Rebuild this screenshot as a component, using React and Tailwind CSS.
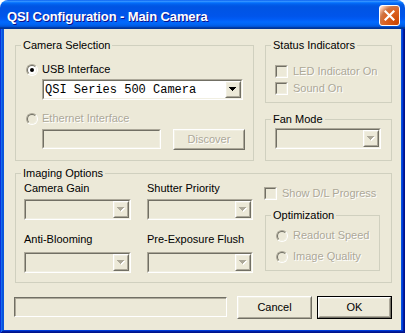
import React from 'react';

const DIS = 'text-[#ACA899] [text-shadow:1px_1px_0_#fff]';

function Sunken({ className = '', inner = '', children }) {
  return (
    <div className={`border border-t-[#ACA899] border-l-[#ACA899] border-r-white border-b-white ${className}`}>
      <div className={`h-full border border-t-[#716F64] border-l-[#716F64] border-r-[#F1EFE2] border-b-[#F1EFE2] ${inner}`}>
        {children}
      </div>
    </div>
  );
}

function Raised({ className = '', inner = '', children }) {
  return (
    <div className={`border border-t-white border-l-white border-r-[#716F64] border-b-[#716F64] ${className}`}>
      <div className={`h-full border border-t-[#F1EFE2] border-l-[#F1EFE2] border-r-[#ACA899] border-b-[#ACA899] ${inner}`}>
        {children}
      </div>
    </div>
  );
}

function Tri({ disabled }) {
  const rows = (fill, dx, dy) =>
    [0, 1, 2, 3].map((i) => (
      <rect key={fill + i} x={i + dx} y={i + dy} width={7 - 2 * i} height={1} fill={fill} />
    ));
  return (
    <svg width="8" height="5" shapeRendering="crispEdges">
      {disabled ? [...rows('#fff', 1, 1), ...rows('#ACA899', 0, 0)] : rows('#000', 0, 0)}
    </svg>
  );
}

function Combo({ className = '', value, disabled }) {
  return (
    <Sunken className={className} inner={`flex items-stretch ${disabled ? 'bg-[#ECE9D8]' : 'bg-white'}`}>
      <div className="flex-1 flex items-center pl-[1px] font-['Liberation_Mono',monospace] text-[12px] leading-[14px] text-black whitespace-nowrap overflow-hidden">
        {value}
      </div>
      <Raised className="w-[16px]" inner="flex items-center justify-center bg-[#ECE9D8]">
        <Tri disabled={disabled} />
      </Raised>
    </Sunken>
  );
}

function Radio({ checked, disabled }) {
  return (
    <div className="w-[12px] h-[12px] shrink-0 rounded-full border border-t-[#ACA899] border-l-[#ACA899] border-r-white border-b-white">
      <div
        className={`w-full h-full rounded-full border border-t-[#716F64] border-l-[#716F64] border-r-[#F1EFE2] border-b-[#F1EFE2] flex items-center justify-center ${
          disabled ? 'bg-[#ECE9D8]' : 'bg-white'
        }`}
      >
        {checked && <div className="w-[4px] h-[4px] rounded-full bg-black" />}
      </div>
    </div>
  );
}

function Check() {
  return <Sunken className="w-[13px] h-[13px] shrink-0" inner="bg-[#ECE9D8]" />;
}

function Row({ children, gap = 'gap-[4px]' }) {
  return <div className={`flex items-center h-[13px] ${gap}`}>{children}</div>;
}

function Group({ title, className = '', children }) {
  return (
    <div className={`relative border border-[#D0D0BF] ${className}`}>
      <span className="absolute -top-[7px] left-[5px] bg-[#ECE9D8] px-[2px] leading-[13px] text-black whitespace-nowrap">
        {title}
      </span>
      {children}
    </div>
  );
}

function Label({ children, disabled }) {
  return <span className={`leading-[13px] whitespace-nowrap ${disabled ? DIS : 'text-black'}`}>{children}</span>;
}

export default function App() {
  return (
    <div className="w-[405px] h-[333px] bg-white font-['Liberation_Sans',Arial,sans-serif] text-[11px] overflow-hidden">
      <div className="w-[405px] h-[333px] flex flex-col rounded-t-[8px] overflow-hidden">
        {/* Title bar */}
        <div className="h-[29px] shrink-0 flex items-start pl-[7px] pr-[5px] bg-[linear-gradient(180deg,#0058EE_0%,#3A93FF_4%,#288EFF_6%,#127DFF_8%,#036FFC_10%,#0262EE_14%,#0057E5_20%,#0054E3_24%,#0055EB_56%,#005BF5_66%,#026AFE_76%,#0062EF_86%,#0052D6_92%,#0040AB_94%,#003092_100%)]">
          <span className="mt-[10px] text-white font-bold text-[13px] leading-[13px] tracking-[-0.1px] [text-shadow:1px_1px_#0F1089] whitespace-nowrap">
            QSI Configuration - Main Camera
          </span>
          <div className="ml-auto mt-[5px] w-[21px] h-[21px] rounded-[3px] border border-white bg-[radial-gradient(circle_at_90%_90%,#CC4600_0%,#DC6527_55%,#CD7546_70%,#FFCCB2_90%,#ffffff_100%)] flex items-center justify-center">
            <svg width="11" height="11" viewBox="0 0 11 11">
              <path d="M1.5 1.5 L9.5 9.5 M9.5 1.5 L1.5 9.5" stroke="#fff" strokeWidth="2.2" strokeLinecap="square" />
            </svg>
          </div>
        </div>

        {/* Frame */}
        <div className="flex-1 flex px-[4px] pb-[3px] bg-[#0855DD] shadow-[inset_1px_0_#0831D9,inset_-1px_-1px_#00138C,inset_2px_0_#166AEE,inset_-2px_-2px_#001EA0,inset_3px_0_#0855DD,inset_-3px_-3px_#003BDA]">
          <div className="flex-1 bg-[#ECE9D8] flex flex-col pt-[16px]">
            {/* Top row */}
            <div className="flex gap-[11px] ml-[11px]">
              <Group title="Camera Selection" className="w-[239px] h-[116px]">
                <div className="flex flex-col pl-[10px] pt-[17px]">
                  <Row>
                    <Radio checked />
                    <Label>USB Interface</Label>
                  </Row>
                  <Combo className="ml-[16px] mt-[3px] w-[201px] h-[21px]" value="QSI Series 500 Camera" />
                  <div className="mt-[12px]">
                    <Row>
                      <Radio disabled />
                      <Label disabled>Ethernet Interface</Label>
                    </Row>
                  </div>
                  <div className="flex items-start ml-[16px] mt-[4px] gap-[12px]">
                    <Sunken className="w-[119px] h-[20px]" inner="bg-[#ECE9D8]" />
                    <Raised className="w-[72px] h-[21px]" inner="flex items-center justify-center bg-[#ECE9D8]">
                      <Label disabled>Discover</Label>
                    </Raised>
                  </div>
                </div>
              </Group>

              <div className="flex flex-col gap-[16px]">
                <Group title="Status Indicators" className="w-[127px] h-[58px]">
                  <div className="flex flex-col gap-[4px] pl-[9px] pt-[19px]">
                    <Row gap="gap-[5px]">
                      <Check />
                      <Label disabled>LED Indicator On</Label>
                    </Row>
                    <Row gap="gap-[5px]">
                      <Check />
                      <Label disabled>Sound On</Label>
                    </Row>
                  </div>
                </Group>
                <Group title="Fan Mode" className="w-[127px] h-[42px]">
                  <div className="pl-[9px] pt-[8px]">
                    <Combo className="w-[106px] h-[21px]" disabled value="" />
                  </div>
                </Group>
              </div>
            </div>

            {/* Imaging options */}
            <Group title="Imaging Options" className="ml-[11px] mt-[12px] w-[377px] h-[110px]">
              <div className="flex pl-[8px]">
                <div className="flex flex-col w-[107px] pt-[8px]">
                  <Label>Camera Gain</Label>
                  <Combo className="mt-[4px] w-[107px] h-[21px]" disabled value="" />
                  <div className="mt-[11px]">
                    <Label>Anti-Blooming</Label>
                  </div>
                  <Combo className="mt-[4px] w-[107px] h-[21px]" disabled value="" />
                </div>
                <div className="flex flex-col w-[106px] ml-[16px] pt-[8px]">
                  <Label>Shutter Priority</Label>
                  <Combo className="mt-[4px] w-[106px] h-[21px]" disabled value="" />
                  <div className="mt-[11px]">
                    <Label>Pre-Exposure Flush</Label>
                  </div>
                  <Combo className="mt-[4px] w-[106px] h-[21px]" disabled value="" />
                </div>
                <div className="flex flex-col ml-[11px] pt-[13px]">
                  <Row gap="gap-[5px]">
                    <Check />
                    <Label disabled>Show D/L Progress</Label>
                  </Row>
                  <Group title="Optimization" className="ml-[1px] mt-[15px] w-[115px] h-[56px]">
                    <div className="flex flex-col gap-[8px] pl-[10px] pt-[13px]">
                      <Row gap="gap-[5px]">
                        <Radio disabled />
                        <Label disabled>Readout Speed</Label>
                      </Row>
                      <Row gap="gap-[5px]">
                        <Radio disabled />
                        <Label disabled>Image Quality</Label>
                      </Row>
                    </div>
                  </Group>
                </div>
              </div>
            </Group>

            {/* Bottom row */}
            <div className="flex items-start ml-[10px] mt-[13px]">
              <div className="mt-[1px] w-[213px] h-[20px] border border-t-[#716F64] border-l-[#716F64] border-r-white border-b-white">
                <div className="h-full border-t border-l border-t-[#ACA899] border-l-[#ACA899]" />
              </div>
              <Raised className="ml-[10px] w-[75px] h-[23px]" inner="flex items-center justify-center bg-[#ECE9D8]">
                <Label>Cancel</Label>
              </Raised>
              <div className="ml-[5px] w-[75px] h-[23px] border border-black">
                <Raised className="h-full" inner="flex items-center justify-center bg-[#ECE9D8]">
                  <Label>OK</Label>
                </Raised>
              </div>
            </div>
          </div>
        </div>
      </div>
    </div>
  );
}
